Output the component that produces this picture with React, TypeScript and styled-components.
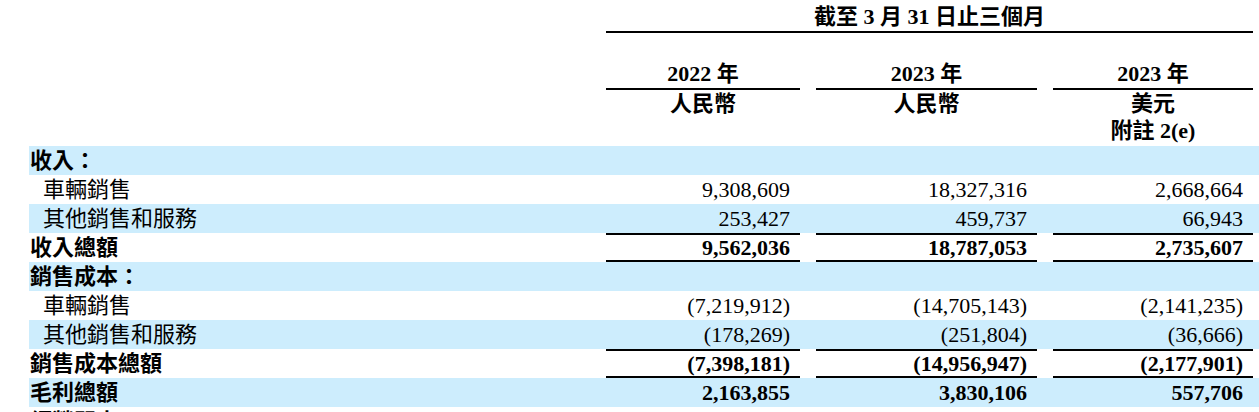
import styled, {createGlobalStyle} from "styled-components";

type Row = {
    label: string;
    values?: string[];
    bold?: boolean;
    indent?: boolean;
    ruled?: boolean;
};

const rows: Row[] = [
    {label: "收入：", bold: true},
    {label: "車輛銷售", indent: true, values: ["9,308,609", "18,327,316", "2,668,664"]},
    {label: "其他銷售和服務", indent: true, values: ["253,427", "459,737", "66,943"]},
    {label: "收入總額", bold: true, ruled: true, values: ["9,562,036", "18,787,053", "2,735,607"]},
    {label: "銷售成本：", bold: true},
    {label: "車輛銷售", indent: true, values: ["(7,219,912)", "(14,705,143)", "(2,141,235)"]},
    {label: "其他銷售和服務", indent: true, values: ["(178,269)", "(251,804)", "(36,666)"]},
    {label: "銷售成本總額", bold: true, ruled: true, values: ["(7,398,181)", "(14,956,947)", "(2,177,901)"]},
    {label: "毛利總額", bold: true, values: ["2,163,855", "3,830,106", "557,706"]},
    {label: "經營開支：", bold: true},
];

const columns = [
    {year: "2022 年", unit: "人民幣"},
    {year: "2023 年", unit: "人民幣"},
    {year: "2023 年", unit: "美元", note: "附註 2(e)"},
];

const GlobalStyle = createGlobalStyle`
    body {
        margin: 0;
        background: #fff;
        color: #000;
        font-family: "Liberation Serif", "Noto Sans CJK TC", serif;
        overflow: hidden;
    }
`;

const App = () => {
    return (
        <>
            <GlobalStyle />
            <Page>
                <Grid>
                    <Title>截至 3 月 31 日止三個月</Title>
                </Grid>
                <HeaderGrid>
                    <span />
                    {columns.map((c, i) => (
                        <HeaderCell key={i}>
                            <Year>{c.year}</Year>
                            <Unit>{c.unit}</Unit>
                            {c.note && <Unit>{c.note}</Unit>}
                        </HeaderCell>
                    ))}
                </HeaderGrid>
                {rows.map((r, i) => (
                    <BodyRow key={i} $shaded={i % 2 === 0}>
                        <Label $bold={r.bold} $indent={r.indent}>
                            {r.label}
                        </Label>
                        {(r.values ?? ["", "", ""]).map((v, j) => (
                            <Value key={j} $bold={r.bold} $ruled={r.ruled}>
                                {v}
                            </Value>
                        ))}
                    </BodyRow>
                ))}
            </Page>
        </>
    );
};

const Page = styled.div`
    width: 1230px;
    padding: 2px 0 0 29px;
`;

const Grid = styled.div`
    display: grid;
    grid-template-columns: 561px 194px 221px 200px;
    column-gap: 16px;
`;

const Title = styled.div`
    grid-column: 2 / 5;
    text-align: center;
    font-weight: bold;
    font-size: 22px;
    line-height: 29px;
    border-bottom: 2px solid #000;
`;

const HeaderGrid = styled(Grid)`
    margin-top: 27px;
    margin-bottom: 2px;
    align-items: start;
`;

const HeaderCell = styled.div`
    display: flex;
    flex-direction: column;
    text-align: center;
    font-weight: bold;
    font-size: 22px;
`;

const Year = styled.div`
    line-height: 28px;
    border-bottom: 2px solid #000;
`;

const Unit = styled.div`
    line-height: 27px;
`;

const BodyRow = styled(Grid)<{$shaded: boolean}>`
    height: 29px;
    background: ${(p) => (p.$shaded ? "#cdedfd" : "#fff")};
`;

const Label = styled.div<{$bold?: boolean; $indent?: boolean}>`
    font-size: 22px;
    line-height: 29px;
    white-space: nowrap;
    font-weight: ${(p) => (p.$bold ? "bold" : "normal")};
    padding-left: ${(p) => (p.$indent ? "14px" : "1px")};
`;

const Value = styled.div<{$bold?: boolean; $ruled?: boolean}>`
    box-sizing: border-box;
    height: 29px;
    font-size: 22px;
    line-height: 25px;
    text-align: right;
    padding-right: 10px;
    white-space: nowrap;
    font-weight: ${(p) => (p.$bold ? "bold" : "normal")};
    border-top: 2px solid ${(p) => (p.$ruled ? "#000" : "transparent")};
    border-bottom: 2px solid ${(p) => (p.$ruled ? "#000" : "transparent")};
`;

export default App;
